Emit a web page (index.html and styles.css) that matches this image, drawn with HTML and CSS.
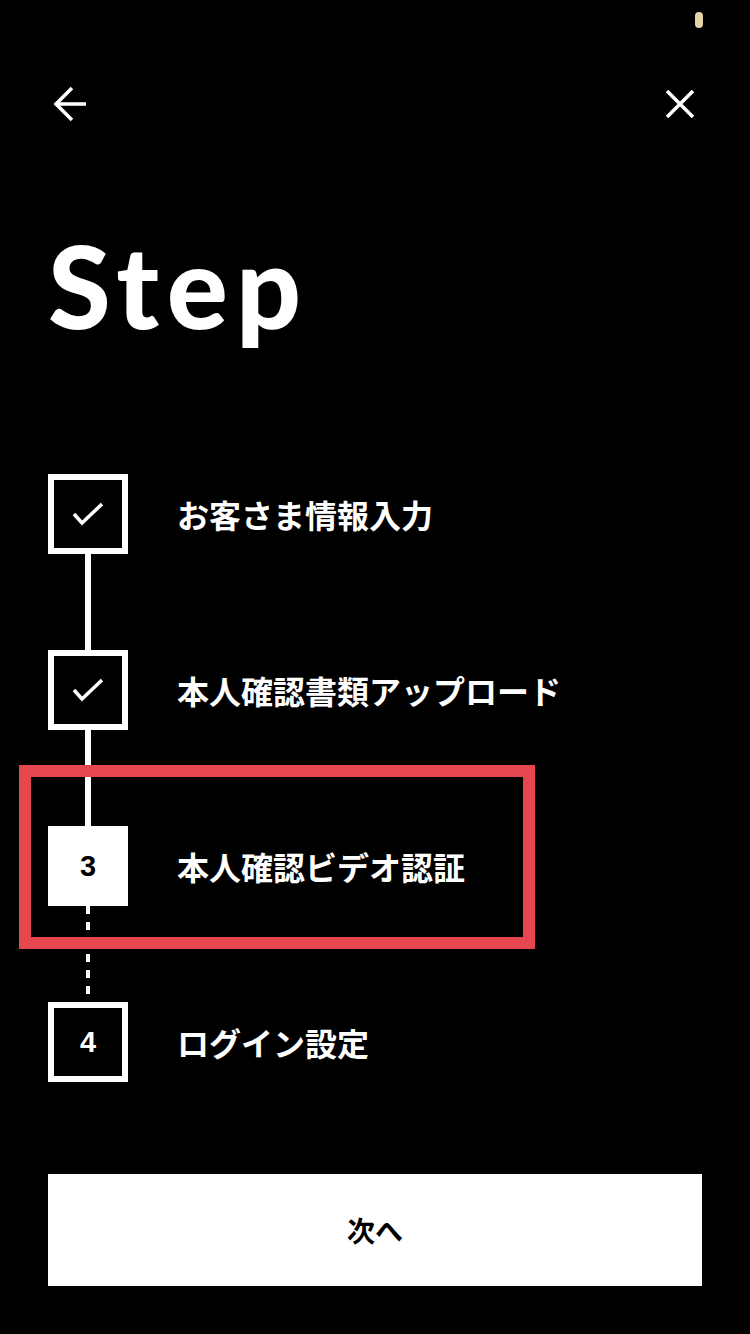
FILE: index.html
```html
<!DOCTYPE html>
<html lang="ja">
<head>
<meta charset="utf-8">
<title>Step</title>
<link rel="stylesheet" href="styles.css">
</head>
<body>
<div class="screen">
  <div class="status"><span class="pill"></span></div>
  <nav class="nav">
    <button class="icon-btn" aria-label="戻る">
      <svg width="40" height="40" viewBox="0 0 40 40"><path d="M5 20H36M22 4L6 20L22 36" fill="none" stroke="#fff" stroke-width="3.5"/></svg>
    </button>
    <button class="icon-btn" aria-label="閉じる">
      <svg width="40" height="40" viewBox="0 0 40 40"><path d="M7 7L33 33M33 7L7 33" fill="none" stroke="#fff" stroke-width="3.5"/></svg>
    </button>
  </nav>
  <h1 class="title">Step</h1>
  <ol class="steps">
    <li class="step">
      <span class="box"><svg width="32" height="26" viewBox="0 0 32 26"><path d="M2 13L10 22L30 3" fill="none" stroke="#fff" stroke-width="3.5"/></svg></span>
      <span class="label">お客さま情報入力</span>
    </li>
    <li class="connector"><span class="line"></span></li>
    <li class="step">
      <span class="box"><svg width="32" height="26" viewBox="0 0 32 26"><path d="M2 13L10 22L30 3" fill="none" stroke="#fff" stroke-width="3.5"/></svg></span>
      <span class="label">本人確認書類アップロード</span>
    </li>
    <li class="connector"><span class="line"></span></li>
    <li class="step current">
      <span class="box filled">3</span>
      <span class="label">本人確認ビデオ認証</span>
      <span class="highlight"></span>
    </li>
    <li class="connector"><span class="line dashed"></span></li>
    <li class="step">
      <span class="box">4</span>
      <span class="label">ログイン設定</span>
    </li>
  </ol>
  <button class="next">次へ</button>
</div>
</body>
</html>
```

FILE: styles.css
```css
* { box-sizing: border-box; }
html, body { margin: 0; padding: 0; background: #000; }
body { width: 750px; height: 1334px; overflow: hidden; }
.screen {
  width: 750px;
  height: 1334px;
  background: #000;
  color: #fff;
  font-family: "Noto Sans CJK JP", "Noto Sans", sans-serif;
}
.status {
  height: 40px;
  display: flex;
  justify-content: flex-end;
  padding: 12px 47px 0 0;
}
.pill {
  width: 8px;
  height: 16px;
  border-radius: 4px;
  background: #e5d3a7;
}
.nav {
  margin-top: 44px;
  height: 40px;
  padding: 0 50px;
  display: flex;
  justify-content: space-between;
}
.icon-btn {
  width: 40px;
  height: 40px;
  padding: 0;
  border: 0;
  background: none;
  display: block;
}
.icon-btn svg { display: block; }
.title {
  margin: 104px 0 0 48px;
  font-family: "Lato", "Liberation Sans", sans-serif;
  font-weight: 900;
  font-size: 114px;
  line-height: 114px;
  height: 114px;
  letter-spacing: 8px;
}
.steps {
  list-style: none;
  margin: 132px 0 0 48px;
  padding: 0;
}
.step {
  position: relative;
  display: flex;
  align-items: center;
  height: 80px;
}
.box {
  width: 80px;
  height: 80px;
  border: 6px solid #fff;
  display: flex;
  align-items: center;
  justify-content: center;
  font-family: "Liberation Sans", Arial, sans-serif;
  font-weight: 700;
  font-size: 29px;
  color: #fff;
  flex: none;
}
.box svg { display: block; }
.box.filled { background: #fff; color: #000; }
.label {
  margin-left: 49px;
  font-size: 32px;
  font-weight: 700;
  line-height: 1;
  letter-spacing: 0;
}
.connector {
  height: 96px;
  width: 80px;
}
.line {
  display: block;
  width: 6px;
  height: 96px;
  margin-left: 37px;
  background: #fff;
}
.line.dashed {
  width: 4px;
  margin-left: 38px;
  background: repeating-linear-gradient(to bottom, #fff 0 8px, transparent 8px 16px);
}
.highlight {
  position: absolute;
  left: -29px;
  top: -61px;
  width: 516px;
  height: 184px;
  border: 12px solid #e6464d;
  pointer-events: none;
}
.next {
  display: block;
  margin: 92px 0 0 48px;
  width: 654px;
  height: 112px;
  border: 0;
  padding: 0;
  background: #fff;
  color: #000;
  font-family: "Noto Sans CJK JP", sans-serif;
  font-weight: 700;
  font-size: 28px;
}
```
